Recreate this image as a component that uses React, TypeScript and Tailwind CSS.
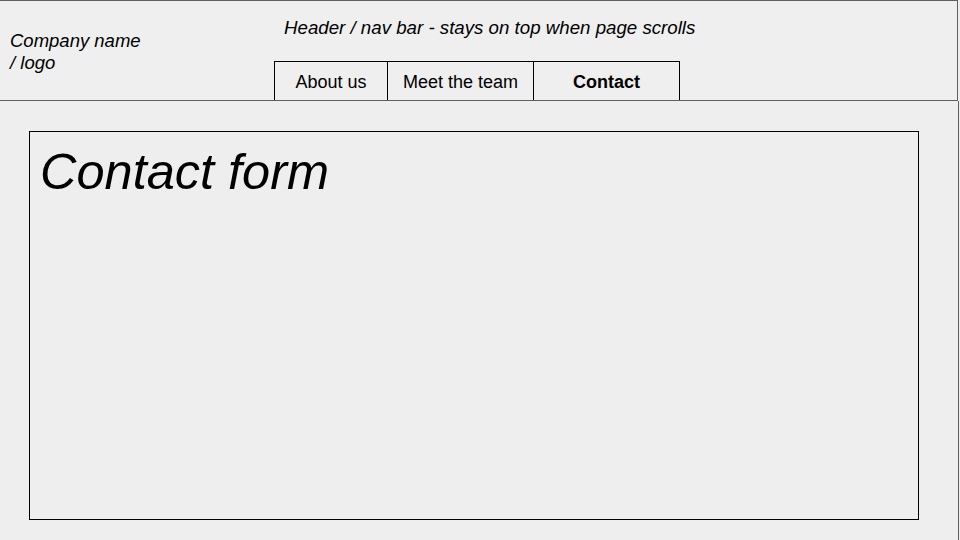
export default function App() {
  const tabs = [
    { label: "About us", width: "w-[113px]", active: false },
    { label: "Meet the team", width: "w-[146px]", active: false },
    { label: "Contact", width: "w-[146px]", active: true },
  ];

  return (
    <div
      className="w-[960px] h-[540px] bg-[#eeeeee] overflow-hidden text-black"
      style={{ fontFamily: '"Liberation Sans", Arial, sans-serif' }}
    >
      {/* Header */}
      <header className="h-[101px] w-[958px] flex border-t border-r border-b border-[#5f5f5f] bg-[#efefef]">
        <div className="w-[274px] shrink-0 pl-[10px] pt-[29px] italic text-[18.5px] leading-[22px]">
          Company name
          <br />/ logo
        </div>
        <div className="flex flex-col">
          <p className="pl-[10px] pt-[16px] italic text-[18.7px] leading-[22px]">
            Header / nav bar - stays on top when page scrolls
          </p>
          <nav className="mt-auto self-start flex h-[39px] border-t border-l border-black">
            {tabs.map((t) => (
              <div
                key={t.label}
                className={`${t.width} flex items-center justify-center border-r border-black text-[18px] pt-[2px] ${
                  t.active ? "font-bold" : ""
                }`}
              >
                {t.label}
              </div>
            ))}
          </nav>
        </div>
      </header>

      {/* Page body */}
      <main className="w-[959px] h-[439px] border-r border-[#5f5f5f] pt-[30px] pl-[29px]">
        <section className="w-[890px] h-[389px] border border-black pl-[10px] pt-[10px]">
          <h1 className="italic text-[50.5px] leading-[60px]">Contact form</h1>
        </section>
      </main>
    </div>
  );
}
